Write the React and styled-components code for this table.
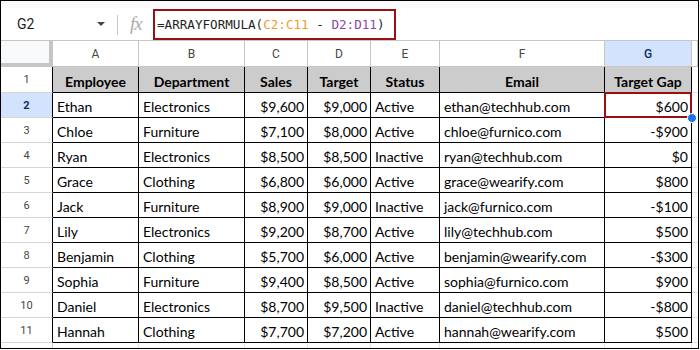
import React from 'react';
import styled, {createGlobalStyle} from 'styled-components';

const GlobalStyle = createGlobalStyle`
  body {
    margin: 0;
    background: #ffffff;
    font-family: Roboto, "Liberation Sans", sans-serif;
  }
`

const columns = ['A', 'B', 'C', 'D', 'E', 'F', 'G'];

const header = ['Employee', 'Department', 'Sales', 'Target', 'Status', 'Email', 'Target Gap'];

const rows = [
  ['Ethan', 'Electronics', '$9,600', '$9,000', 'Active', 'ethan@techhub.com', '$600'],
  ['Chloe', 'Furniture', '$7,100', '$8,000', 'Active', 'chloe@furnico.com', '-$900'],
  ['Ryan', 'Electronics', '$8,500', '$8,500', 'Inactive', 'ryan@techhub.com', '$0'],
  ['Grace', 'Clothing', '$6,800', '$6,000', 'Active', 'grace@wearify.com', '$800'],
  ['Jack', 'Furniture', '$8,900', '$9,000', 'Inactive', 'jack@furnico.com', '-$100'],
  ['Lily', 'Electronics', '$9,200', '$8,700', 'Active', 'lily@techhub.com', '$500'],
  ['Benjamin', 'Clothing', '$5,700', '$6,000', 'Active', 'benjamin@wearify.com', '-$300'],
  ['Sophia', 'Furniture', '$9,400', '$8,500', 'Active', 'sophia@furnico.com', '$900'],
  ['Daniel', 'Electronics', '$8,700', '$9,500', 'Inactive', 'daniel@techhub.com', '-$800'],
  ['Hannah', 'Clothing', '$7,700', '$7,200', 'Active', 'hannah@wearify.com', '$500'],
];

// columns holding numbers are right aligned
const numeric = [false, false, true, true, false, false, true];

export default function App() {
  return (
    <Frame>
      <GlobalStyle />
      <TopStrip />
      <Toolbar>
        <NameBox>
          <NameText>G2</NameText>
          <Caret />
        </NameBox>
        <Divider />
        <Fx>fx</Fx>
        <FormulaBox>
          =ARRAYFORMULA(<RangeRef $color="#f29b2f">C2:C11</RangeRef> - <RangeRef $color="#8b48a8">D2:D11</RangeRef>)
        </FormulaBox>
      </Toolbar>
      <Sheet>
        <Corner />
        {columns.map((c) => (
          <ColHead key={c} $active={c === 'G'}>{c}</ColHead>
        ))}
        <ColHead />

        <RowHead>1</RowHead>
        {header.map((h, i) => (
          <HeadCell key={i}>{h}</HeadCell>
        ))}
        <Spare />

        {rows.map((row, r) => (
          <React.Fragment key={r}>
            <RowHead $active={r === 0}>{r + 2}</RowHead>
            {row.map((v, i) => (
              <DataCell key={i} $right={numeric[i]}>
                {v}
                {r === 0 && i === 6 && (
                  <>
                    <Selection />
                    <FillHandle />
                  </>
                )}
              </DataCell>
            ))}
            <Spare />
          </React.Fragment>
        ))}

        <RowHead $plain>12</RowHead>
        {columns.map((c) => (
          <EmptyCell key={c} />
        ))}
        <Spare />
      </Sheet>
    </Frame>
  );
}

const Frame = styled.div`
  width: 699px;
  height: 349px;
  box-sizing: border-box;
  border: 1px solid #000000;
  overflow: hidden;
  background: #ffffff;
  display: flex;
  flex-direction: column;
`

const TopStrip = styled.div`
  height: 7px;
  flex: none;
  background: #f9fbfd;
`

const Toolbar = styled.div`
  height: 33px;
  flex: none;
  box-sizing: border-box;
  border-bottom: 1px solid #c4c7c5;
  display: flex;
  align-items: flex-start;
`

const NameBox = styled.div`
  width: 116px;
  height: 32px;
  box-sizing: border-box;
  padding: 0 12px 0 16px;
  display: flex;
  align-items: center;
  justify-content: space-between;
`

const NameText = styled.span`
  font-family: Roboto, "Liberation Sans", sans-serif;
  font-size: 14px;
  color: #1f1f1f;
`

const Caret = styled.span`
  width: 0;
  height: 0;
  border-left: 4.5px solid transparent;
  border-right: 4.5px solid transparent;
  border-top: 4.5px solid #444746;
`

const Divider = styled.div`
  width: 1px;
  height: 20px;
  margin-top: 7px;
  background: #c7c7c7;
`

const Fx = styled.span`
  width: 35px;
  height: 32px;
  box-sizing: border-box;
  padding-left: 12px;
  display: flex;
  align-items: center;
  font-family: "Liberation Serif", serif;
  font-style: italic;
  font-size: 19px;
  color: #ababab;
  letter-spacing: -1px;
`

const FormulaBox = styled.div`
  width: 243px;
  height: 31px;
  margin-top: 1px;
  box-sizing: border-box;
  border: 2px solid #9a1010;
  padding: 0 0 0 2px;
  display: flex;
  align-items: center;
  white-space: pre;
  font-family: "DejaVu Sans Mono", "Liberation Mono", monospace;
  font-size: 12.6px;
  color: #1f1f1f;
`

const RangeRef = styled.span`
  color: ${props => props.$color};
`

const Sheet = styled.div`
  display: grid;
  grid-template-columns: 52px 86px 106px 63px 63px 69px 165px 87px 1fr;
  grid-template-rows: 26px 26px repeat(10, 25px) 25px;
`

const Corner = styled.div`
  box-sizing: border-box;
  background: #f8f9fa;
  border-right: 4px solid #c4c7c5;
  border-bottom: 4px solid #c4c7c5;
`

const ColHead = styled.div`
  box-sizing: border-box;
  border-right: 1px solid #c4c7c5;
  border-bottom: 1px solid #c4c7c5;
  background: ${props => props.$active ? '#d3e3fd' : '#ffffff'};
  color: ${props => props.$active ? '#0b2f66' : '#444746'};
  font-weight: ${props => props.$active ? 500 : 400};
  font-size: 12px;
  display: flex;
  align-items: center;
  justify-content: center;
`

const RowHead = styled.div`
  box-sizing: border-box;
  border-right: 1px solid ${props => props.$plain ? '#c4c7c5' : '#000000'};
  border-bottom: 1px solid #d6d6d6;
  background: ${props => props.$active ? '#d3e3fd' : '#ffffff'};
  color: ${props => props.$active ? '#0b2f66' : '#444746'};
  font-weight: ${props => props.$active ? 700 : 400};
  font-size: 11px;
  display: flex;
  align-items: center;
  justify-content: center;
`

const Cell = styled.div`
  position: relative;
  box-sizing: border-box;
  border-right: 1px solid #000000;
  border-bottom: 1px solid #000000;
  font-family: Lato, "Open Sans", sans-serif;
  font-size: 14px;
  color: #000000;
  white-space: nowrap;
  display: flex;
  align-items: flex-end;
  padding: 0 4px 2px;
`

const HeadCell = styled(Cell)`
  background: #cccccc;
  font-weight: 700;
  justify-content: center;
  padding: 0 2px 2px;
`

const DataCell = styled(Cell)`
  justify-content: ${props => props.$right ? 'flex-end' : 'flex-start'};
  padding: ${props => props.$right ? '0 3px 2px 2px' : '0 4px 2px'};
`

const EmptyCell = styled.div`
  box-sizing: border-box;
  border-right: 1px solid #e2e3e3;
  border-bottom: 1px solid #e2e3e3;
`

const Spare = styled.div`
  box-sizing: border-box;
  border-bottom: 1px solid #e2e3e3;
`

const Selection = styled.span`
  position: absolute;
  left: -1px;
  top: -1px;
  right: -1px;
  bottom: -1px;
  border: 2px solid #9a1010;
  pointer-events: none;
`

const FillHandle = styled.span`
  position: absolute;
  right: -6px;
  bottom: -6px;
  width: 8px;
  height: 8px;
  border-radius: 50%;
  background: #1a73e8;
  border: 1px solid #ffffff;
  z-index: 2;
`
